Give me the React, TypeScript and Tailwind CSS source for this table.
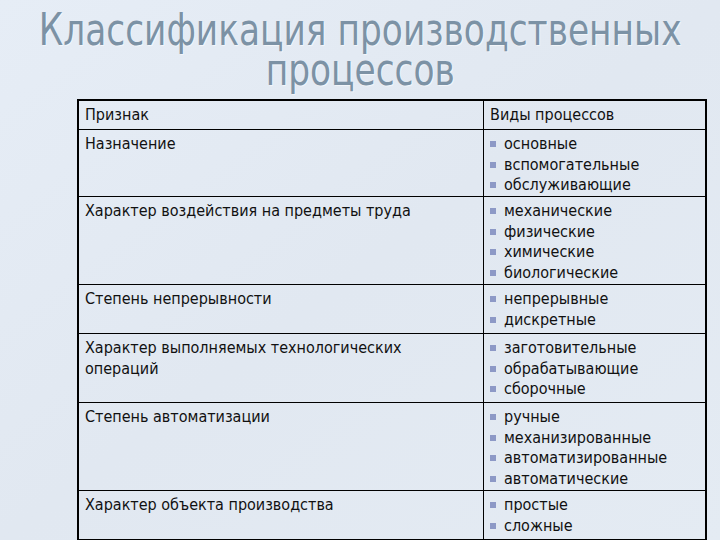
import React from 'react';

const rows: { label: string; items: string[]; h: string }[] = [
  { label: 'Назначение', items: ['основные', 'вспомогательные', 'обслуживающие'], h: 'h-[67px]' },
  {
    label: 'Характер воздействия на предметы труда',
    items: ['механические', 'физические', 'химические', 'биологические'],
    h: 'h-[88px]',
  },
  { label: 'Степень непрерывности', items: ['непрерывные', 'дискретные'], h: 'h-[49px]' },
  {
    label: 'Характер выполняемых технологических операций',
    items: ['заготовительные', 'обрабатывающие', 'сборочные'],
    h: 'h-[69px]',
  },
  {
    label: 'Степень автоматизации',
    items: ['ручные', 'механизированные', 'автоматизированные', 'автоматические'],
    h: 'h-[88px]',
  },
  { label: 'Характер объекта производства', items: ['простые', 'сложные'], h: 'h-[48px]' },
];

function Bullet({ text }: { text: string }) {
  return (
    <li className="flex items-center gap-[8px]">
      <span className="w-[6px] h-[6px] bg-[#8d99c6] shrink-0" />
      <span>{text}</span>
    </li>
  );
}

export default function App() {
  return (
    <div className="w-[720px] h-[540px] overflow-hidden bg-gradient-to-br from-[#e6edf6] via-[#e1e8f1] to-[#e4ebf3] font-['DejaVu_Sans_Condensed','DejaVu_Sans',sans-serif] text-[#111]">
      <div className="h-[99px] pt-[10px] flex flex-col items-center text-[45px] leading-[40px] text-[#7c92a5] [text-shadow:1px_1px_1px_rgba(255,255,255,0.6)] whitespace-nowrap">
        <h1 className="scale-x-[0.85]">Классификация производственных</h1>
        <div className="scale-x-[0.85]">процессов</div>
      </div>

      <div className="ml-[77px] w-[630px] border-2 border-black text-[16px] leading-[20.5px]">
        <div className="grid grid-cols-[405px_1fr] h-[29px] border-b border-black">
          <div className="border-r border-black px-[6px] pt-[4px]">Признак</div>
          <div className="px-[6px] pt-[4px]">Виды процессов</div>
        </div>
        {rows.map((r, i) => (
          <div
            key={r.label}
            className={`grid grid-cols-[405px_1fr] ${r.h} ${i < rows.length - 1 ? 'border-b border-black' : ''}`}
          >
            <div className="border-r border-black px-[6px] pt-[4px] pr-[24px]">{r.label}</div>
            <ul className="px-[6px] pt-[4px]">
              {r.items.map((t) => (
                <Bullet key={t} text={t} />
              ))}
            </ul>
          </div>
        ))}
      </div>
    </div>
  );
}
